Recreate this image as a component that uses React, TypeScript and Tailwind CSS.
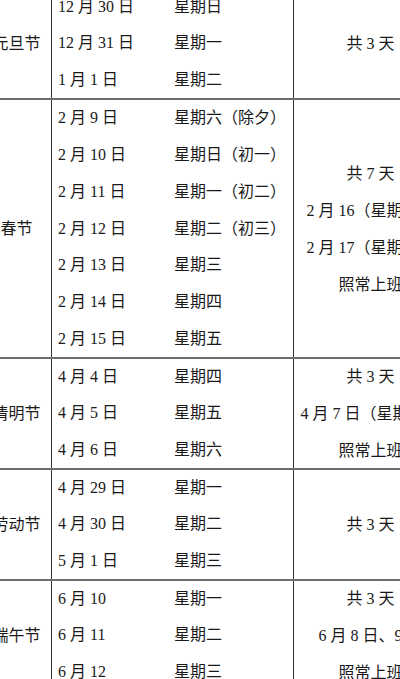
type Section = {
  name: string
  rows: [string, string][]
  notes: string[]
}

const sections: Section[] = [
  {
    name: "元旦节",
    rows: [
      ["12 月 30 日", "星期日"],
      ["12 月 31 日", "星期一"],
      ["1 月 1 日", "星期二"],
    ],
    notes: ["共 3 天"],
  },
  {
    name: "春节",
    rows: [
      ["2 月 9 日", "星期六（除夕）"],
      ["2 月 10 日", "星期日（初一）"],
      ["2 月 11 日", "星期一（初二）"],
      ["2 月 12 日", "星期二（初三）"],
      ["2 月 13 日", "星期三"],
      ["2 月 14 日", "星期四"],
      ["2 月 15 日", "星期五"],
    ],
    notes: ["共 7 天", "2 月 16（星期六）", "2 月 17（星期日）", "照常上班"],
  },
  {
    name: "清明节",
    rows: [
      ["4 月 4 日", "星期四"],
      ["4 月 5 日", "星期五"],
      ["4 月 6 日", "星期六"],
    ],
    notes: ["共 3 天", "4 月 7 日（星期日）", "照常上班"],
  },
  {
    name: "劳动节",
    rows: [
      ["4 月 29 日", "星期一"],
      ["4 月 30 日", "星期二"],
      ["5 月 1 日", "星期三"],
    ],
    notes: ["共 3 天"],
  },
  {
    name: "端午节",
    rows: [
      ["6 月 10", "星期一"],
      ["6 月 11", "星期二"],
      ["6 月 12", "星期三"],
    ],
    notes: ["共 3 天", "6 月 8 日、9 日", "照常上班"],
  },
]

function HolidaySection({ section }: { section: Section }) {
  return (
    <div
      className="flex border-t-2 border-[#6e6e6e]"
      style={{ height: section.rows.length * 37 }}
    >
      <div className="flex w-[69px] shrink-0 items-center justify-center">
        {section.name}
      </div>
      <div className="flex w-[242px] shrink-0 flex-col border-l border-[#333]">
        {section.rows.map(([date, day]) => (
          <div key={date} className="flex flex-1 items-center">
            <span className="w-[122px] shrink-0 pl-[6px]">{date}</span>
            <span>{day}</span>
          </div>
        ))}
      </div>
      <div className="flex w-[154px] shrink-0 flex-col items-center justify-center border-l border-[#333]">
        {section.notes.map((line) => (
          <div key={line} className="h-[37px] whitespace-nowrap leading-[37px]">
            {line}
          </div>
        ))}
      </div>
    </div>
  )
}

export default function App() {
  return (
    <div className="h-[679px] w-[400px] overflow-hidden bg-white">
      <div
        className="ml-[-18px] mt-[-13px] w-[470px] text-[16px] text-[#1a1a1a]"
        style={{ fontFamily: '"Liberation Serif", "Noto Sans CJK SC", serif' }}
      >
        {sections.map((section) => (
          <HolidaySection key={section.name} section={section} />
        ))}
      </div>
    </div>
  )
}
